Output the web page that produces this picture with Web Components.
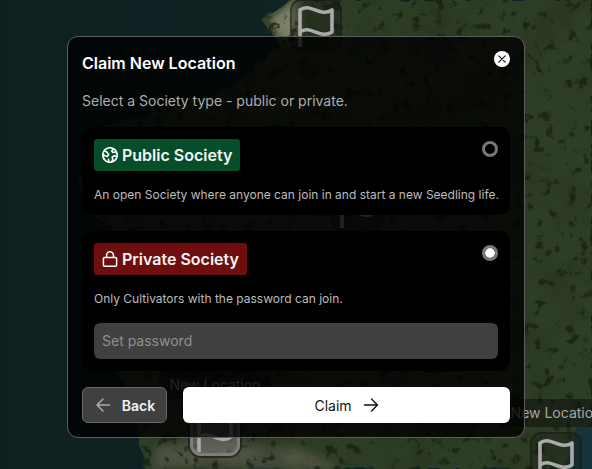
<!DOCTYPE html>
<html lang="en"><head><meta charset="utf-8"><title>Claim New Location</title>
<style>
html,body{margin:0;padding:0;background:#0f2021}
body{width:592px;height:469px;overflow:hidden;position:relative;font-family:Inter,"Liberation Sans",sans-serif}
</style></head><body>
<map-view>
  <map-pin style="--x:316px;--y:25px"></map-pin>
  <map-pin style="--x:358px;--y:206px" label></map-pin>
  <map-pin style="--x:441px;--y:346px" label></map-pin>
  <map-pin style="--x:215px;--y:430px" label strong></map-pin>
  <map-pin style="--x:556px;--y:458px" label></map-pin>
</map-view>
<claim-dialog>
  <span slot="title">Claim New Location</span>
  <span slot="intro">Select a Society type - public or private.</span>
  <society-card tone="public" name="Public Society">An open Society where anyone can join in and start a new Seedling life.</society-card>
  <society-card tone="private" name="Private Society" selected>Only Cultivators with the password can join.
    <password-field slot="extra" placeholder="Set password"></password-field>
  </society-card>
  <action-button slot="back" kind="back">Back</action-button>
  <action-button slot="claim" kind="claim">Claim</action-button>
</claim-dialog>
<script>
function def(name, css, html, init){
  customElements.define(name, class extends HTMLElement{
    connectedCallback(){
      if(this.shadowRoot) return;
      const r=this.attachShadow({mode:'open'});
      r.innerHTML='<style>'+css+'</style>'+(typeof html==='function'?html(this):html);
      if(init) init(this,r);
    }
  });
}
const globeIcon='<svg width="16" height="16" viewBox="1.5 1.5 15 15" fill="none" stroke="#fff" stroke-width="1.5" stroke-linecap="round" stroke-linejoin="round"><circle cx="9" cy="9" r="6.8"/><path d="M3.9 5.2 6 6.2 7.8 8.6 6.4 10.4 4.6 10 2.6 8.4M12.2 3.2 10.6 5.2 11.6 6.6 14 6 15 7M15.4 10.4 13.2 9.6 11 11 11.6 13.4 10.6 15.4M8 15.4 7.6 13"/></svg>';
const lockIcon='<svg width="16" height="16" viewBox="0 0 16 16" fill="none" stroke="#fff" stroke-width="1.5" stroke-linejoin="round"><rect x="1.4" y="6.4" width="13.2" height="8.8" rx="1.2"/><path d="M4.6 6.4V4.1a3.4 3.4 0 0 1 6.8 0V6.4"/></svg>';

def('map-view',`:host{display:block;position:absolute;inset:0;overflow:hidden}
svg{position:absolute;inset:0}`,
`<svg width="592" height="469" viewBox="0 0 592 469">
<defs>
<filter id="speck" x="0" y="0" width="100%" height="100%" color-interpolation-filters="sRGB"><feTurbulence type="fractalNoise" baseFrequency=".09" numOctaves="4" seed="11"/><feColorMatrix type="matrix" values="0 0 0 0 .09  0 0 0 0 .13  0 0 0 0 .07  0 7 0 0 -4.2"/></filter>
<filter id="mott" x="0" y="0" width="100%" height="100%" color-interpolation-filters="sRGB"><feTurbulence type="fractalNoise" baseFrequency=".02" numOctaves="3" seed="3"/><feColorMatrix type="matrix" values="0 0 0 0 .14  0 0 0 0 .19  0 0 0 0 .11  3 0 0 0 -1.4"/></filter>
<filter id="rough" x="-5%" y="-5%" width="110%" height="110%"><feTurbulence type="fractalNoise" baseFrequency=".08" numOctaves="2" seed="5" result="n"/><feDisplacementMap in="SourceGraphic" in2="n" scale="8"/></filter>
<filter id="blur" x="-30%" y="-30%" width="160%" height="160%"><feGaussianBlur stdDeviation="4"/></filter>
<clipPath id="land"><path d="M292 0 262 20 280 45 240 82 165 112 108 124 78 180 90 214 112 226 118 372 138 420 144 469H592V0Z"/></clipPath>
<linearGradient id="sea" x1="0" x2="1" y1="0" y2="0"><stop offset="0" stop-color="#0f2021"/><stop offset="1" stop-color="#122525"/></linearGradient>
</defs>
<rect width="592" height="469" fill="url(#sea)"/>
<g filter="url(#rough)">
<path d="M292 0 262 20 280 45 240 82 165 112 108 124 78 180 90 214 112 226 118 372 138 420 144 469H592V0Z" fill="#2f3e26"/>
</g>
<g clip-path="url(#land)">
<path d="M298 -6 268 20 284 46 300 40Z" fill="#7c7f62" filter="url(#blur)"/>
<path d="M150 469 156 446 205 442 300 448 340 469Z" fill="#4f5242" filter="url(#blur)"/>
<rect width="592" height="469" filter="url(#mott)" opacity=".4"/>
<rect width="592" height="469" filter="url(#speck)" opacity=".8"/>
</g>
<path d="M566 469 576 428 592 425V469Z" fill="#17343a"/>
</svg><slot></slot>`);

def('map-pin',`:host{display:block;position:absolute;left:var(--x);top:var(--y);width:0;height:0;color:#aaa}
.box{position:absolute;left:-26px;top:-26px;box-sizing:border-box;width:52px;height:52px;border-radius:11px;border:2px solid rgba(20,24,18,.45);background:rgba(20,24,18,.3);display:flex;align-items:center;justify-content:center}
:host([strong]) .box{border:3px solid #7d7d7d;background:rgba(120,120,120,.5);box-shadow:0 0 0 2px rgba(20,20,20,.6);width:50px;height:52px;left:-25px}
.lab{position:absolute;left:-56px;top:-59px;width:112px;height:28px;background:rgba(0,0,0,.4);font:400 14px/28px Inter,"Liberation Sans",sans-serif;white-space:nowrap;color:#a6a6a6;text-align:center}
svg{display:block}`,
el=>`${el.hasAttribute('label')?'<div class="lab">New Location</div>':''}<div class="box"><svg width="44" height="44" viewBox="0 0 44 44" fill="none" stroke="currentColor" stroke-width="3.6" stroke-linecap="round" stroke-linejoin="round"><path d="M6 44V7C16 -1 26 15 38 7V29C26 37 16 21 6 29"/></svg></div>`);

def('claim-dialog',`:host{display:block;position:absolute;left:67px;top:36px;box-sizing:border-box;width:458px;height:402px;padding:14px;border:1.5px solid #5c5f5b;border-radius:11px;background:rgba(0,0,0,.8);color:#fff}
header{display:flex;justify-content:space-between;align-items:flex-start;height:25px}
h2{margin:0;font:600 16px/25px Inter,"Liberation Sans",sans-serif;color:#fff}
.x{width:16px;height:16px;border-radius:50%;background:#fff;display:block}
.intro{margin:16px 0 0;font:400 14px/17px Inter,"Liberation Sans",sans-serif;color:#aeaeae;height:17px}
.cards{display:flex;flex-direction:column;gap:16px;margin-top:18px}
footer{display:flex;gap:16px;margin-top:16px}`,
`<header><h2><slot name="title"></slot></h2><svg class="x" viewBox="0 0 16 16" fill="none" stroke="#111" stroke-width="1.2" stroke-linecap="round"><path d="M4.8 4.8l6.4 6.4M11.2 4.8l-6.4 6.4"/></svg></header>
<p class="intro"><slot name="intro"></slot></p>
<div class="cards"><slot></slot></div>
<footer><slot name="back"></slot><slot name="claim"></slot></footer>`);

def('society-card',`:host{display:block;box-sizing:border-box;position:relative;padding:12px;border-radius:10px;background:#000}
.badge{display:inline-flex;align-items:center;gap:4px;box-sizing:border-box;height:32px;padding:0 8px;border-radius:3px;font:600 16px/32px Inter,"Liberation Sans",sans-serif;color:#f4f4f4;vertical-align:top}
:host([tone=public]) .badge{background:#064e2a}
:host([tone=private]) .badge{background:#6e0e0e}
.desc{margin:15px 0 0;font:400 12px/17px Inter,"Liberation Sans",sans-serif;color:#bcbcbc;height:17px;white-space:nowrap}
.extra{display:block}
.radio{position:absolute;top:14px;right:12px;box-sizing:border-box;width:16px;height:16px;border-radius:50%;border:3px solid #777;background:transparent;background-clip:padding-box}
:host([selected]) .radio{background:#fff;background-clip:padding-box}
svg{display:block}`,
el=>`<div class="badge">${el.getAttribute('tone')==='public'?globeIcon:lockIcon}<span>${el.getAttribute('name')}</span></div>
<p class="desc"><slot></slot></p><slot name="extra" class="extra"></slot><div class="radio"></div>`);

def('password-field',`:host{display:block;margin-top:16px}
input{display:block;width:100%;box-sizing:border-box;height:36px;border:0;outline:0;border-radius:6px;background:#404040;color:#fff;padding:0 8px 1px;font:400 14px Inter,"Liberation Sans",sans-serif}
input::placeholder{color:#8f8f8f;opacity:1}`,
el=>`<input type="password" placeholder="${el.getAttribute('placeholder')}">`);

def('action-button',`:host{display:block}
:host([kind=claim]){flex:1}
button{display:flex;align-items:center;justify-content:center;box-sizing:border-box;width:100%;height:36px;border-radius:6px;font:inherit;cursor:pointer;padding:0}
:host([kind=back]) button{width:85px;background:#404040;border:1px solid #6a6a6a;color:#f2f2f2;font:600 14px Inter,"Liberation Sans",sans-serif;gap:10px}
:host([kind=claim]) button{background:#fff;border:0;color:#111;font:400 14px Inter,"Liberation Sans",sans-serif;gap:11px}
svg{display:block}`,
el=>el.getAttribute('kind')==='back'
?`<button><svg width="18" height="18" viewBox="0 0 18 18" fill="none" stroke="#a9a9a9" stroke-width="1.6" stroke-linecap="round" stroke-linejoin="round"><path d="M15.5 9H3M9 3 3 9l6 6"/></svg><slot></slot></button>`
:`<button><slot></slot><svg width="16" height="16" viewBox="0 0 16 16" fill="none" stroke="#111" stroke-width="1.4" stroke-linecap="round" stroke-linejoin="round"><path d="M1.5 8h13M8.5 2l6 6-6 6"/></svg></button>`);
</script>
</body></html>
